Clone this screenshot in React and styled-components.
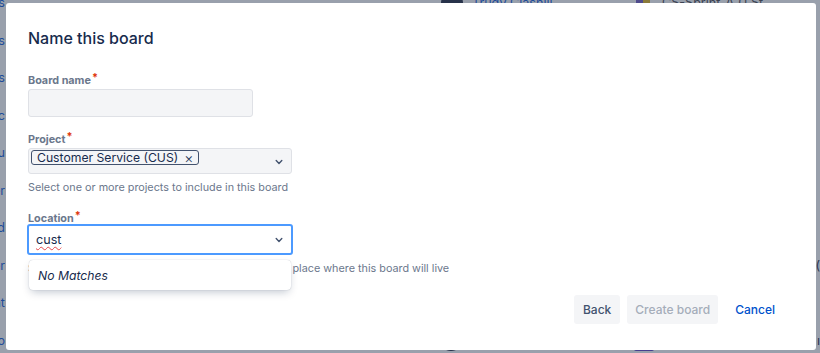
import React from 'react'
import styled, { createGlobalStyle } from 'styled-components'

const GlobalStyle = createGlobalStyle`
  html, body {
    margin: 0;
    padding: 0;
    height: 100%;
    overflow: hidden;
    background: #99a0ac;
    font-family: Inter, "Noto Sans", "Liberation Sans", sans-serif;
  }
`

// rows of the board list that sits behind the dialog
const rows = [
  { link: 'Sprints', name: 'Trudy Clashill', sprint: 'CS-Sprint-A (1 St' },
  { link: 'Projects' },
  { link: 'Issues' },
  { link: 'Doc' },
  { link: 'Menu' },
  { link: 'Tracker' },
  { link: 'Board' },
  { link: 'Filter', extra: '(' },
  { link: 'Front' },
  { link: 'Kanbo', name: ' ', sprint: ' ', extra: 'ı' },
]

export default function App() {
  return (
    <>
      <GlobalStyle />
      <BoardList>
        {rows.map((r, i) => (
          <BoardRow key={i}>
            <LinkCell><span>{r.link}</span></LinkCell>
            <Spacer />
            <Avatar $show={!!r.name} />
            <OwnerName>{r.name && r.name.trim() ? r.name : ''}</OwnerName>
            <SprintIcon $show={!!r.sprint} $top={i === 0} />
            <SprintName>{r.sprint && r.sprint.trim() ? r.sprint : ''}</SprintName>
            <ExtraCell>{r.extra}</ExtraCell>
          </BoardRow>
        ))}
      </BoardList>

      <Modal>
        <Title>Name this board</Title>

        <Form>
          <Field>
            <Label>Board name<Required>*</Required></Label>
            <TextInput />
          </Field>

          <Field>
            <Label>Project<Required>*</Required></Label>
            <Select>
              <Tags>
                <Tag>Customer Service (CUS)<TagRemove>×</TagRemove></Tag>
              </Tags>
              <Chevron />
            </Select>
            <Help>Select one or more projects to include in this board</Help>
          </Field>

          <Field>
            <Label>Location<Required>*</Required></Label>
            <MenuAnchor>
              <Select $focused>
                <TypedValue><Misspelt>cust</Misspelt></TypedValue>
                <Chevron />
              </Select>
              <Menu>
                <NoMatches>No Matches</NoMatches>
              </Menu>
            </MenuAnchor>
            <Help>Select a project, or a user profile that will act as the place where this board will live</Help>
          </Field>
        </Form>

        <Footer>
          <Button $pad="9px">Back</Button>
          <Button $pad="8px" disabled>Create board</Button>
          <Button $pad="9px" $link>Cancel</Button>
        </Footer>
      </Modal>
    </>
  )
}

function Chevron() {
  return (
    <ChevronIcon width="10" height="10" viewBox="0 0 10 10">
      <path d="M2.2 3.6 L5 6.4 L7.8 3.6" fill="none" stroke="#42526e" strokeWidth="1.4" strokeLinecap="round" strokeLinejoin="round" />
    </ChevronIcon>
  )
}

// background page
const BoardList = styled.div`
  display: flex;
  flex-direction: column;
  margin-top: -16px;
  font-size: 12.6px;
  color: #1f4c99;
`

const BoardRow = styled.div`
  display: flex;
  align-items: center;
  height: 37.5px;
`

const LinkCell = styled.div`
  width: 5px;
  display: flex;
  justify-content: flex-end;
  overflow: hidden;
  white-space: nowrap;
`

const Spacer = styled.div`
  width: 436px;
`

const Avatar = styled.div`
  width: 22px;
  height: 22px;
  border-radius: 50%;
  background: ${p => (p.$show ? '#27324a' : 'transparent')};
`

const OwnerName = styled.div`
  width: 164px;
  padding-left: 9px;
  white-space: nowrap;
`

const SprintIcon = styled.div`
  width: ${p => (p.$top ? '14px' : '20px')};
  height: 22px;
  margin-right: ${p => (p.$top ? '12px' : '6px')};
  border-radius: 2px;
  background: ${p => (p.$show ? (p.$top ? 'linear-gradient(90deg,#4f4a8c 50%,#8a7a3a 50%)' : '#463f8f') : 'transparent')};
`

const SprintName = styled.div`
  width: 157px;
  color: #3b4252;
  white-space: nowrap;
  overflow: hidden;
`

const ExtraCell = styled.div`
  color: #2b3550;
`

// dialog
const Modal = styled.div`
  position: fixed;
  top: 3px;
  left: 6px;
  width: 810px;
  height: 347px;
  box-sizing: border-box;
  display: flex;
  flex-direction: column;
  padding: 23px 32px 26px 22px;
  background: #fff;
  border-radius: 3px;
  color: #172b4d;
`

const Title = styled.h1`
  margin: 0;
  font-size: 16px;
  line-height: 24px;
  font-weight: 500;
  color: #172b4d;
`

const Form = styled.div`
  display: flex;
  flex-direction: column;
  gap: 16px;
  margin-top: 24px;
`

const Field = styled.div`
  display: flex;
  flex-direction: column;
  align-items: flex-start;
`

const Label = styled.label`
  font-size: 10.8px;
  line-height: 14px;
  font-weight: 700;
  color: #6b778c;
  margin-bottom: 1px;
`

const Required = styled.span`
  color: #de350b;
  padding-left: 1px;
  line-height: 0;
  vertical-align: 3px;
`

const TextInput = styled.div`
  width: 225px;
  height: 28px;
  box-sizing: border-box;
  border: 1px solid #dfe1e6;
  border-radius: 3px;
  background: #f4f5f7;
`

const MenuAnchor = styled.div`
  position: relative;
`

const Select = styled.div`
  display: flex;
  align-items: ${p => (p.$focused ? 'center' : 'flex-start')};
  box-sizing: border-box;
  width: ${p => (p.$focused ? '266px' : '264px')};
  height: ${p => (p.$focused ? '31px' : '26px')};
  margin: ${p => (p.$focused ? '-3px -1px 0' : '0')};
  padding: ${p => (p.$focused ? '0 7px 0 7px' : '1px 7px 0 2px')};
  border: ${p => (p.$focused ? '2px solid #4c9aff' : '1px solid #dfe1e6')};
  border-radius: 3px;
  background: ${p => (p.$focused ? '#fff' : '#f4f5f7')};
`

const Tags = styled.div`
  flex: 1;
  display: flex;
`

const Tag = styled.span`
  display: inline-flex;
  align-items: center;
  height: 15px;
  box-sizing: border-box;
  padding: 0 5px 0 5px;
  border: 1px solid #42526e;
  border-radius: 3px;
  font-size: 12.2px;
  color: #172b4d;
  white-space: nowrap;
`

const TagRemove = styled.span`
  margin-left: 6px;
  font-size: 14px;
  line-height: 13px;
  font-weight: 300;
  color: #253858;
`

const ChevronIcon = styled.svg`
  flex: none;
  align-self: center;
`

const TypedValue = styled.div`
  flex: 1;
  font-size: 12.6px;
  color: #172b4d;
`

const Misspelt = styled.span`
  text-decoration: underline wavy #e5484d;
  text-decoration-thickness: 1px;
  text-underline-offset: 2px;
`

const Menu = styled.div`
  position: absolute;
  top: 33px;
  left: 1px;
  z-index: 2;
  width: 262px;
  height: 30px;
  display: flex;
  align-items: center;
  padding-left: 9px;
  box-sizing: border-box;
  background: #fff;
  border-radius: 4px;
  box-shadow: 0 4px 8px -2px rgba(9, 30, 66, 0.25), 0 0 1px rgba(9, 30, 66, 0.31);
`

const NoMatches = styled.span`
  font-size: 12.2px;
  font-style: italic;
  color: #172b4d;
`

const Help = styled.div`
  margin-top: 6px;
  font-size: 10.8px;
  line-height: 16px;
  color: #6b778c;
  white-space: nowrap;
`

const Footer = styled.div`
  margin-top: auto;
  display: flex;
  justify-content: flex-end;
  gap: 7px;
`

const Button = styled.button`
  height: 29px;
  padding: 0 ${p => p.$pad};
  border: none;
  border-radius: 3px;
  font-family: inherit;
  font-size: 12px;
  font-weight: 500;
  background: ${p => (p.$link ? 'transparent' : '#f4f5f7')};
  color: ${p => (p.$link ? '#0052cc' : '#42526e')};
  margin-left: ${p => (p.$link ? '1px' : '0')};

  &:disabled {
    color: #a5adba;
  }
`
